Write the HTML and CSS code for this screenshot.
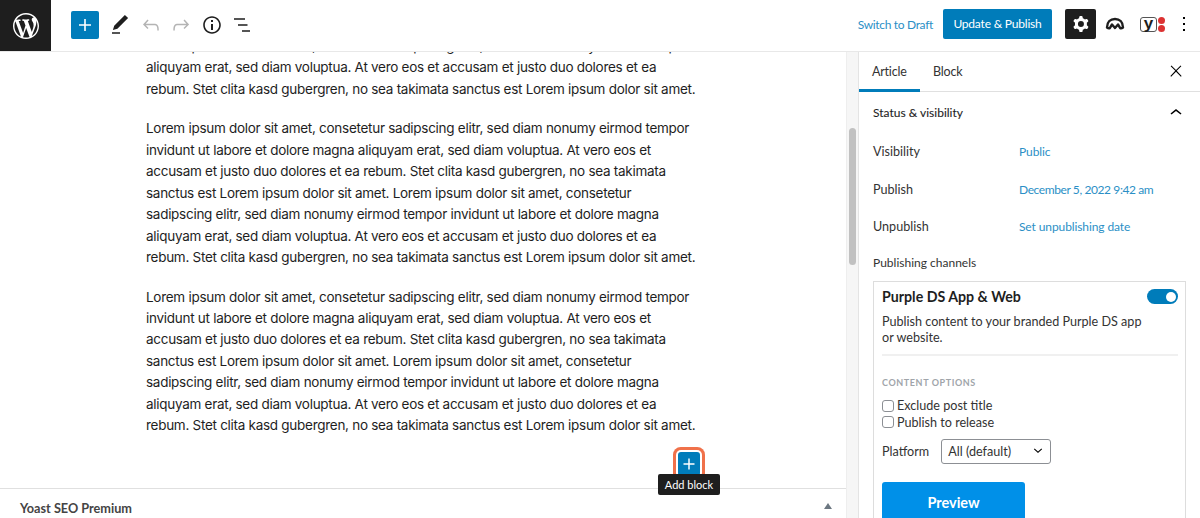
FILE: index.html
```html
<!DOCTYPE html>
<html lang="en">
<head>
    <meta charset="UTF-8">
    <meta name="viewport" content="width=device-width, initial-scale=1.0">
    <title>Edit Article</title>
    <link rel="stylesheet" href="styles.css">
</head>
<body>
    <header class="topbar">
        <div class="wp-logo">
            <svg viewBox="0 0 20 20" width="26" height="26"><path fill="#fff" d="M20 10c0-5.51-4.49-10-10-10C4.48 0 0 4.49 0 10c0 5.52 4.48 10 10 10 5.51 0 10-4.48 10-10zM7.78 15.37L4.37 6.22c.55-.02 1.17-.08 1.17-.08.5-.06.44-1.13-.06-1.11 0 0-1.45.11-2.37.11-.18 0-.37 0-.58-.01C4.12 2.69 6.87 1.11 10 1.11c2.33 0 4.45.87 6.05 2.34-.68-.11-1.65.39-1.65 1.58 0 .74.45 1.36.9 2.1.35.61.55 1.36.55 2.46 0 1.49-1.4 5-1.4 5l-3.03-8.37c.54-.02.82-.17.82-.17.5-.05.44-1.25-.06-1.22 0 0-1.44.12-2.38.12-.87 0-2.33-.12-2.33-.12-.5-.03-.56 1.2-.06 1.22l.92.08 1.26 3.41zM17.41 10c.24-.64.74-1.87.43-4.25.7 1.29 1.05 2.71 1.05 4.25 0 3.29-1.73 6.24-4.4 7.78.97-2.59 1.94-5.2 2.92-7.78zM6.1 18.09C3.12 16.65 1.11 13.53 1.11 10c0-1.3.23-2.48.72-3.59C3.25 10.3 4.67 14.2 6.1 18.09zm4.03-6.63l2.58 6.98c-.86.29-1.76.45-2.71.45-.79 0-1.57-.11-2.29-.33.81-2.38 1.62-4.74 2.42-7.1z"/></svg>
        </div>
        <div class="tools">
            <div class="add-btn">
                <svg viewBox="0 0 24 24" width="24" height="24"><path fill="#fff" d="M18 11.2h-5.2V6h-1.6v5.2H6v1.6h5.2V18h1.6v-5.2H18z"/></svg>
            </div>
            <div class="tool">
                <svg viewBox="0 0 24 24" width="24" height="24"><path d="M20.1 5.1L16.9 2 6.2 12.7l-1.3 4.4 4.5-1.3L20.1 5.1zM4 20.8h8v-1.5H4v1.5z"/></svg>
            </div>
            <div class="tool off">
                <svg viewBox="0 0 24 24" width="24" height="24"><path d="M18.3 11.7c-.6-.6-1.4-.9-2.3-.9H6.7l2.9-3.3-1.1-1-4.5 5L8.5 16l1-1-2.7-2.7H16c.5 0 .9.2 1.3.5 1 1 1 3.4 1 4.5v.3h1.5v-.2c0-1.5 0-4.3-1.5-5.7z"/></svg>
            </div>
            <div class="tool off">
                <svg viewBox="0 0 24 24" width="24" height="24"><path d="M15.6 6.5l-1.1 1 2.9 3.3H8c-.9 0-1.7.3-2.3.9-1.4 1.5-1.4 4.2-1.4 5.6v.2h1.5v-.3c0-1.1 0-3.5 1-4.5.3-.3.7-.5 1.3-.5h9.2L14.5 15l1 1.1 4.6-4.6-4.5-5z"/></svg>
            </div>
            <div class="tool">
                <svg viewBox="0 0 24 24" width="24" height="24"><path d="M12 3.2c-4.8 0-8.8 3.9-8.8 8.8 0 4.8 3.9 8.8 8.8 8.8 4.8 0 8.8-3.9 8.8-8.8 0-4.8-4-8.8-8.8-8.8zm0 16c-4 0-7.2-3.3-7.2-7.2C4.8 8 8 4.8 12 4.8s7.2 3.3 7.2 7.2c0 4-3.2 7.2-7.2 7.2zM11 17h2v-6h-2v6zm0-8h2V7h-2v2z"/></svg>
            </div>
            <div class="tool">
                <svg viewBox="0 0 24 24" width="24" height="24"><path d="M4 5.2h11v1.6H4zM8 11.2h9.5v1.6H8zM12 17.2h8v1.6h-8z"/></svg>
            </div>
        </div>
        <div class="actions">
            <a class="link draft">Switch to Draft</a>
            <button class="publish" type="button">Update &amp; Publish</button>
            <div class="gear">
                <svg viewBox="0 0 24 24" width="24" height="24"><path fill="#fff" fill-rule="evenodd" d="M10.289 4.836A1 1 0 0111.275 4h1.306a1 1 0 01.987.836l.244 1.466c.787.26 1.503.679 2.108 1.218l1.393-.522a1 1 0 011.216.437l.653 1.13a1 1 0 01-.23 1.273l-1.148.944a6.025 6.025 0 010 2.435l1.149.946a1 1 0 01.23 1.272l-.653 1.13a1 1 0 01-1.216.437l-1.394-.522c-.605.54-1.32.958-2.108 1.218l-.244 1.466a1 1 0 01-.987.836h-1.306a1 1 0 01-.986-.836l-.244-1.466a5.995 5.995 0 01-2.108-1.218l-1.394.522a1 1 0 01-1.217-.436l-.653-1.131a1 1 0 01.23-1.272l1.149-.946a6.026 6.026 0 010-2.435l-1.148-.944a1 1 0 01-.23-1.272l.653-1.131a1 1 0 011.217-.437l1.393.522a5.994 5.994 0 012.108-1.218l.244-1.466zM14.929 12a3 3 0 11-6 0 3 3 0 016 0z"/></svg>
            </div>
            <div class="arch">
                <svg viewBox="0 0 20 14" width="20" height="14"><path fill="none" stroke="#1e1e1e" stroke-width="2.4" stroke-linejoin="round" d="M2 10.5C2 5 5.5 2 10 2s8 3 8 8.5c-1 .8-2 1-2.8.6L13 7.5l-3 3.5-3-3.5-2.2 3.6c-.8.4-1.8.2-2.8-.6z"/></svg>
            </div>
            <div class="yoast">
                <span class="yoast-box"><span class="yoast-y">y</span></span>
                <span class="yoast-dots"><i></i><i></i></span>
            </div>
            <div class="more">
                <svg viewBox="0 0 24 24" width="24" height="24"><path d="M13 19h-2v-2h2v2zm0-6h-2v-2h2v2zm0-6h-2V5h2v2z"/></svg>
            </div>
        </div>
    </header>

    <div class="layout">
        <main class="main">
            <div class="editor">
                <p>Lorem ipsum dolor sit amet, consetetur sadipscing elitr, sed diam nonumy eirmod tempor<br>aliquyam erat, sed diam voluptua. At vero eos et accusam et justo duo dolores et ea<br>rebum. Stet clita kasd gubergren, no sea takimata sanctus est Lorem ipsum dolor sit amet.</p>
                <p>Lorem ipsum dolor sit amet, consetetur sadipscing elitr, sed diam nonumy eirmod tempor<br>invidunt ut labore et dolore magna aliquyam erat, sed diam voluptua. At vero eos et<br>accusam et justo duo dolores et ea rebum. Stet clita kasd gubergren, no sea takimata<br>sanctus est Lorem ipsum dolor sit amet. Lorem ipsum dolor sit amet, consetetur<br>sadipscing elitr, sed diam nonumy eirmod tempor invidunt ut labore et dolore magna<br>aliquyam erat, sed diam voluptua. At vero eos et accusam et justo duo dolores et ea<br>rebum. Stet clita kasd gubergren, no sea takimata sanctus est Lorem ipsum dolor sit amet.</p>
                <p>Lorem ipsum dolor sit amet, consetetur sadipscing elitr, sed diam nonumy eirmod tempor<br>invidunt ut labore et dolore magna aliquyam erat, sed diam voluptua. At vero eos et<br>accusam et justo duo dolores et ea rebum. Stet clita kasd gubergren, no sea takimata<br>sanctus est Lorem ipsum dolor sit amet. Lorem ipsum dolor sit amet, consetetur<br>sadipscing elitr, sed diam nonumy eirmod tempor invidunt ut labore et dolore magna<br>aliquyam erat, sed diam voluptua. At vero eos et accusam et justo duo dolores et ea<br>rebum. Stet clita kasd gubergren, no sea takimata sanctus est Lorem ipsum dolor sit amet.</p>
            </div>
            <div class="meta-panel">
                <span>Yoast SEO Premium</span>
                <i class="caret-up"></i>
            </div>
            <div class="inserter">
                <svg viewBox="0 0 24 24" width="24" height="24"><path fill="#fff" d="M18 11.2h-5.2V6h-1.6v5.2H6v1.6h5.2V18h1.6v-5.2H18z"/></svg>
            </div>
            <div class="tooltip">Add block</div>
        </main>

        <div class="scrollbar"><div class="thumb"></div></div>

        <aside class="sidebar">
            <div class="tabs">
                <div class="tab active">Article</div>
                <div class="tab">Block</div>
                <svg class="close" viewBox="0 0 24 24" width="18" height="18"><path d="M13 11.8l6.1-6.3-1-1-6.1 6.2-6.1-6.2-1 1 6.1 6.3-6.5 6.7 1 1 6.5-6.6 6.500 6.600 1-1z"/></svg>
            </div>
            <div class="section-head">
                <span>Status &amp; visibility</span>
                <svg viewBox="0 0 24 24" width="24" height="24"><path d="M6.5 12.4L12 8l5.5 4.4-.9 1.200L12 10l-4.500 3.600-1-1.200z"/></svg>
            </div>
            <div class="rows">
                <div class="row"><span>Visibility</span><a class="link">Public</a></div>
                <div class="row"><span>Publish</span><a class="link date">December 5, 2022 9:42 am</a></div>
                <div class="row"><span>Unpublish</span><a class="link">Set unpublishing date</a></div>
            </div>
            <div class="channels-label">Publishing channels</div>
            <div class="card">
                <div class="card-head">
                    <strong>Purple DS App &amp; Web</strong>
                    <span class="toggle"><i></i></span>
                </div>
                <p class="card-desc">Publish content to your branded Purple DS app<br>or website.</p>
                <div class="options-title">CONTENT OPTIONS</div>
                <label class="check"><input type="checkbox">Exclude post title</label>
                <label class="check"><input type="checkbox">Publish to release</label>
                <div class="platform">
                    <span>Platform</span>
                    <div class="select">
                        <span>All (default)</span>
                        <svg viewBox="0 0 24 24" width="18" height="18"><path d="M17.5 9.5L12 14.8 6.5 9.5l1-1L12 12.8l4.500-4.300z"/></svg>
                    </div>
                </div>
                <button class="preview" type="button">Preview</button>
            </div>
        </aside>
    </div>
</body>
</html>
```

FILE: styles.css
```css
html, body {
    height: 100%;
}
body {
    margin: 0;
    display: flex;
    flex-direction: column;
    overflow: hidden;
    font-family: Lato, "Liberation Sans", sans-serif;
    font-size: 12.6px;
    color: #333;
    background: #fff;
}
svg {
    display: block;
}

/* top bar */
.topbar {
    flex: none;
    display: flex;
    align-items: center;
    height: 51px;
    border-bottom: 1px solid #e8e8e8;
}
.wp-logo {
    width: 51px;
    height: 51px;
    background: #1e1e1e;
    display: flex;
    align-items: center;
    justify-content: center;
}
.tools {
    display: flex;
    align-items: center;
    margin: 0 0 2px 20px;
}
.add-btn {
    width: 28px;
    height: 28px;
    margin-right: 6px;
    background: #007cba;
    border-radius: 2px;
    display: flex;
    align-items: center;
    justify-content: center;
}
.tool {
    width: 30.5px;
    display: flex;
    justify-content: center;
}
.tool svg {
    fill: #1e1e1e;
}
.tool.off svg {
    fill: #b4b4b4;
}
.actions {
    margin: 0 0 3px auto;
    display: flex;
    align-items: center;
}
.link {
    color: #2b8fc6;
    font-size: 12px;
    letter-spacing: -.1px;
}
.draft {
    margin-right: 10px;
    letter-spacing: -.33px;
}
.date {
    letter-spacing: -.4px;
}
.publish {
    width: 109px;
    height: 30px;
    padding: 0 0 2px;
    border: 0;
    border-radius: 2px;
    background: #007cba;
    color: #fff;
    font: inherit;
    font-size: 12px;
    letter-spacing: -.2px;
}
.gear {
    width: 31px;
    height: 30px;
    margin-left: 13px;
    background: #1e1e1e;
    border-radius: 2px;
    display: flex;
    align-items: center;
    justify-content: center;
}
.arch {
    margin-left: 9px;
}
.yoast {
    display: flex;
    align-items: center;
    margin-left: 15px;
    gap: 1px;
}
.yoast-box {
    width: 15px;
    height: 13px;
    border: 1px solid #555;
    border-radius: 3px;
    display: flex;
    justify-content: center;
}
.yoast-y {
    font-family: "Liberation Sans", sans-serif;
    font-size: 17px;
    font-weight: bold;
    line-height: 11px;
    color: #1e1e1e;
}
.yoast-dots {
    display: flex;
    flex-direction: column;
    gap: 1px;
}
.yoast-dots i {
    width: 7px;
    height: 7px;
    border-radius: 50%;
    background: #dc3232;
}
.more {
    margin: 0 4px 0 7px;
}

/* editor column */
.layout {
    flex: 1;
    display: flex;
    min-height: 0;
}
.main {
    position: relative;
    width: 846px;
    display: flex;
    flex-direction: column;
}
.editor {
    flex: 1;
    min-height: 0;
    overflow: hidden;
    padding-left: 146px;
    font-family: Inter, sans-serif;
    font-size: 13.5px;
    letter-spacing: -.28px;
    line-height: 21.45px;
    color: #1e1e1e;
}
.editor p {
    margin: 0 0 18px;
    white-space: nowrap;
}
.editor p:first-child {
    margin-top: -16px;
}
.meta-panel {
    flex: none;
    height: 30px;
    border-top: 1px solid #e0e0e0;
    padding: 11px 14px 0 20px;
    box-sizing: border-box;
    display: flex;
    align-items: flex-start;
    justify-content: space-between;
    font-size: 12.7px;
    font-weight: 700;
    color: #444;
}
.caret-up {
    width: 0;
    height: 0;
    margin-top: 3px;
    border-left: 4px solid transparent;
    border-right: 4px solid transparent;
    border-bottom: 6px solid #6c7781;
}
.inserter {
    position: absolute;
    left: 678px;
    top: 400px;
    width: 22px;
    height: 24px;
    background: #007cba;
    border-radius: 3px;
    box-shadow: 0 0 0 2px #fff, 0 0 0 5px #f0714a;
    display: flex;
    align-items: center;
    justify-content: center;
}
.tooltip {
    position: absolute;
    left: 658px;
    top: 422px;
    width: 62px;
    height: 21px;
    background: #1e1e1e;
    border-radius: 2px;
    color: #fff;
    font-size: 11px;
    line-height: 21px;
    text-align: center;
}
.scrollbar {
    flex: none;
    width: 9px;
    padding: 76px 0 0 2px;
    background: #f6f6f6;
    border-left: 1px solid #eee;
    border-right: 1px solid #e4e4e4;
}
.thumb {
    width: 7px;
    height: 137px;
    border-radius: 4px;
    background: #c1c1c1;
}

/* sidebar */
.sidebar {
    flex: 1;
    min-width: 0;
    overflow: hidden;
}
.tabs {
    display: flex;
    align-items: flex-start;
    height: 40px;
    box-sizing: border-box;
    border-bottom: 1px solid #e0e0e0;
}
.tab {
    height: 40px;
    line-height: 39px;
    padding: 0 13px;
    box-sizing: border-box;
    font-size: 12.5px;
    letter-spacing: -.2px;
}
.tab.active {
    width: 61px;
    border-bottom: 3px solid #007cba;
}
.close {
    margin: 10px 15px 0 auto;
}
.section-head {
    height: 39px;
    padding: 2px 12px 0 14px;
    box-sizing: border-box;
    display: flex;
    align-items: center;
    justify-content: space-between;
    font-size: 12px;
    color: #1e1e1e;
    -webkit-text-stroke: .1px #1e1e1e;
}
.rows {
    margin-top: 2px;
    padding-left: 14px;
}
.row {
    display: grid;
    grid-template-columns: 146px 1fr;
    height: 37.5px;
    align-items: center;
}
.channels-label {
    margin: 8px 14px 0;
    line-height: 18px;
    font-size: 12px;
}
.card {
    margin: 9px 14px 0;
    padding: 6px 7px 0 8px;
    border: 1px solid #ddd;
    height: 260px;
}
.card-head {
    display: flex;
    align-items: center;
    justify-content: space-between;
    height: 18px;
}
.card-head strong {
    font-size: 14.2px;
    color: #1e1e1e;
}
.toggle {
    width: 31px;
    height: 15px;
    border-radius: 8px;
    background: #007cba;
    display: flex;
    justify-content: flex-end;
    align-items: center;
    padding-right: 2px;
    box-sizing: border-box;
}
.toggle i {
    width: 10px;
    height: 10px;
    border-radius: 50%;
    background: #fff;
}
.card-desc {
    margin: 8px 0 0;
    padding-bottom: 8px;
    line-height: 16px;
    border-bottom: 2px solid #f0f0f0;
}
.options-title {
    margin-top: 21px;
    font-size: 9px;
    font-weight: 700;
    letter-spacing: .6px;
    color: #a0a5aa;
}
.check {
    display: flex;
    align-items: center;
    height: 16.5px;
}
.options-title + .check {
    margin-top: 10px;
}
.check input {
    appearance: none;
    width: 12px;
    height: 12px;
    margin: 0 3px 0 0;
    border: 1px solid #8c8f94;
    border-radius: 3px;
    box-sizing: border-box;
}
.platform {
    display: flex;
    align-items: center;
    gap: 12px;
    margin-top: 8px;
}
.select {
    width: 110px;
    height: 25px;
    padding: 0 3px 0 6px;
    box-sizing: border-box;
    border: 1px solid #8c8f94;
    border-radius: 3px;
    display: flex;
    align-items: center;
    justify-content: space-between;
}
.preview {
    display: block;
    width: 143px;
    height: 42px;
    margin-top: 18px;
    border: 0;
    border-radius: 3px;
    background: #0090e8;
    color: #fff;
    font: inherit;
    font-size: 14.5px;
    font-weight: 700;
}
```
